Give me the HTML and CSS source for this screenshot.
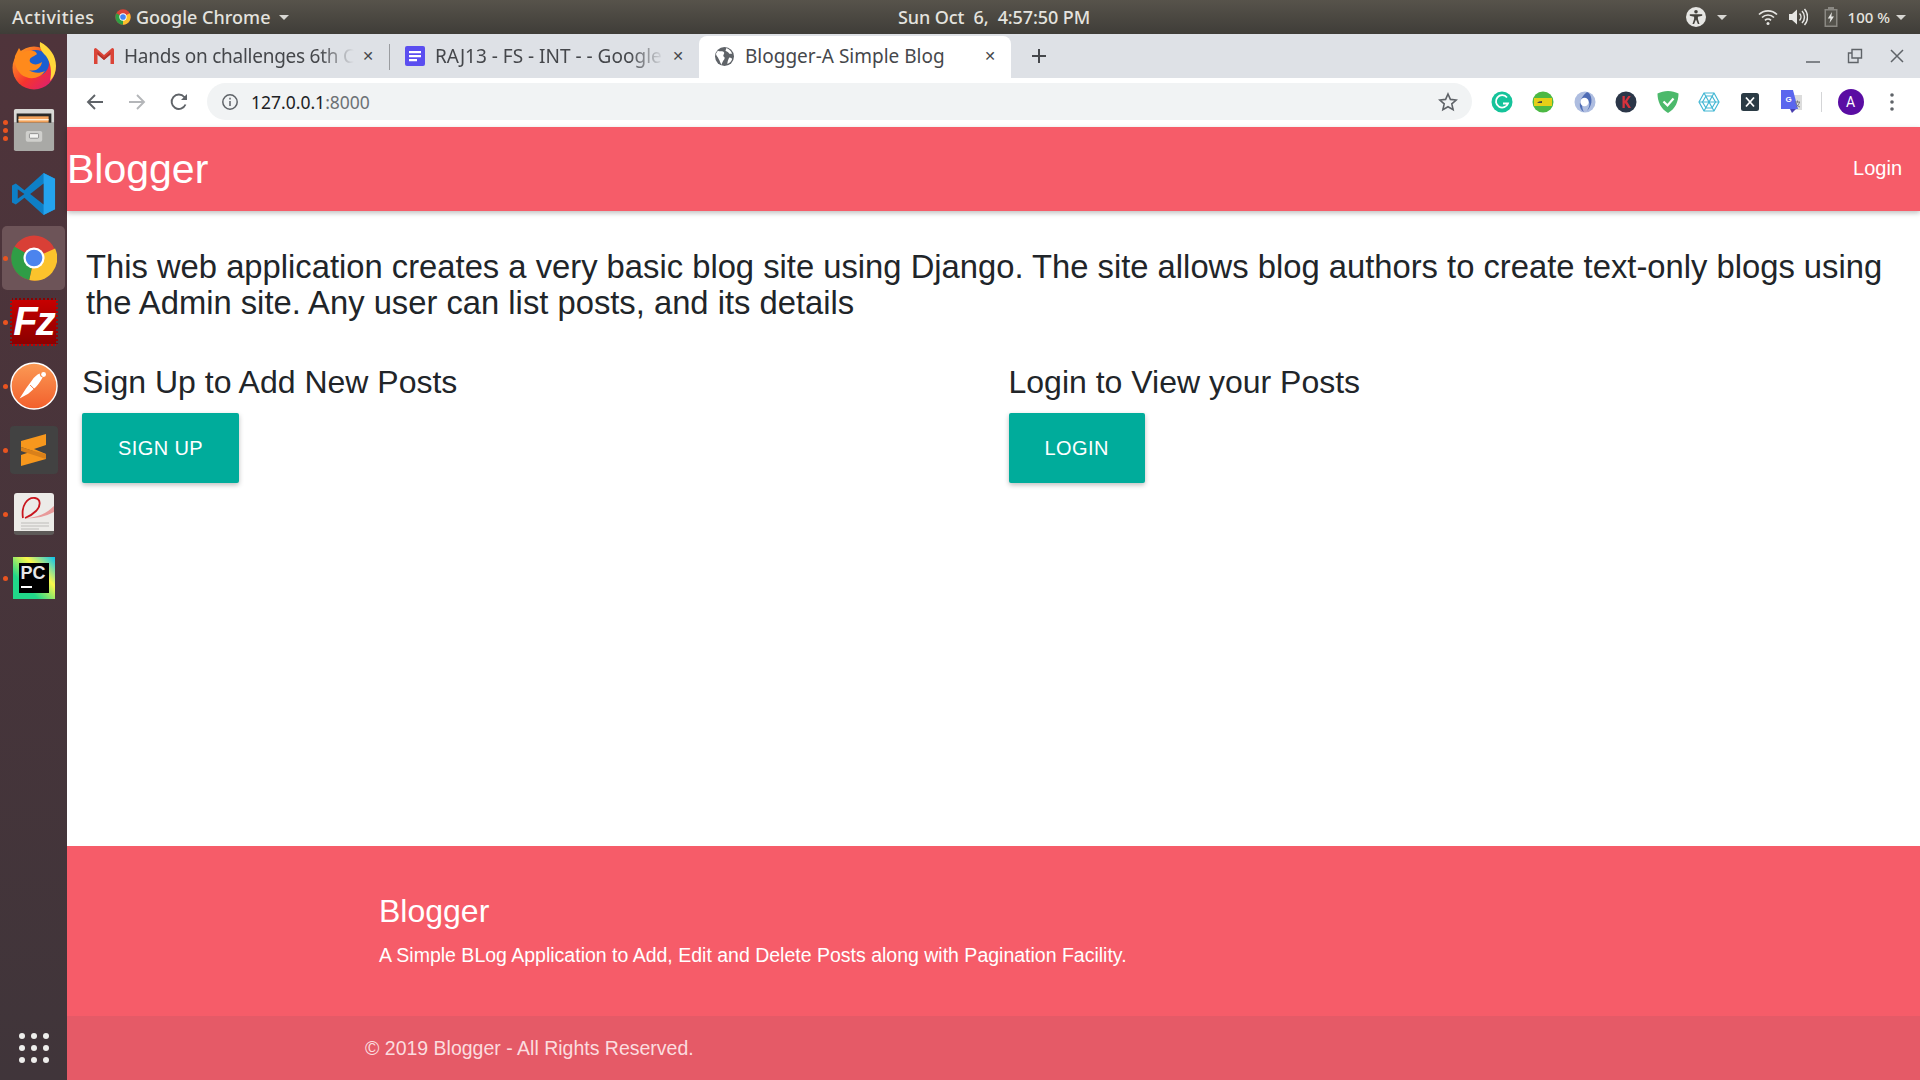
FILE: index.html
```html
<!DOCTYPE html>
<html lang="en">
<head>
  <meta charset="UTF-8">
  <title>Blogger-A Simple Blog</title>
  <link rel="stylesheet" href="styles.css">
</head>
<body>

  <div class="topbar">
    <div class="topbar-left">
      <span class="activities">Activities</span>
      <span class="app-menu">
        <svg width="16" height="16" viewBox="0 0 48 48"><circle cx="24" cy="24" r="23" fill="#db4437"/><path d="M24 24 L44 13 A23 23 0 0 1 24 47Z" fill="#fbc02d"/><path d="M24 24 L24 47 A23 23 0 0 1 4 13Z" fill="#2f9e44"/><circle cx="24" cy="24" r="11" fill="#fff"/><circle cx="24" cy="24" r="8.5" fill="#4285f4"/></svg>
        Google Chrome <i class="caret"></i>
      </span>
    </div>
    <div class="clock">Sun Oct&nbsp; 6,&nbsp; 4:57:50 PM</div>
    <div class="topbar-right">
      <svg class="a11y" width="20" height="20" viewBox="0 0 20 20"><circle cx="10" cy="10" r="10" fill="#e6e6e3"/><circle cx="10" cy="4.7" r="1.8" fill="#45433d"/><path d="M3.8 7.2h12.4v1.5l-4.3 1v2.2l1.6 5h-1.600L10 12.600 8.100 16.900H6.500l1.600-5V9.700L3.800 8.700z" fill="#45433d"/></svg>
      <i class="caret a11y-caret"></i>
      <svg class="wifi" width="20" height="18" viewBox="0 0 20 18" fill="none" stroke="#e6e6e3" stroke-width="1.700"><path d="M1 6.500a13 13 0 0 1 18 0"/><path d="M4 9.500a8.500 8.500 0 0 1 12 0"/><path d="M7 12.300a4.300 4.300 0 0 1 6 0"/><circle cx="10" cy="15.500" r="1.500" fill="#e6e6e3" stroke="none"/></svg>
      <svg class="vol" width="20" height="18" viewBox="0 0 20 18" fill="none" stroke="#e6e6e3" stroke-width="1.500"><path d="M1 6h3l5-4.500v15L4 12H1z" fill="#e6e6e3" stroke="none"/><path d="M11.500 5.500a5 5 0 0 1 0 7"/><path d="M14 3a8.500 8.500 0 0 1 0 12"/><path d="M16.500 1a12 12 0 0 1 0 16"/></svg>
      <svg class="batt" width="16" height="20" viewBox="0 0 16 20"><path d="M5 0h6v2h3.500v18H1.500V2H5z" fill="#8a8882"/><path d="M3 3.500h10v15H3z" fill="#55534c"/><path d="M9 5L4.800 11.500h2.700L6.500 16l4.500-6.500H8.300z" fill="#e6e6e3"/></svg>
      <span class="batt-text">100 %</span>
      <i class="caret"></i>
    </div>
  </div>

  <div class="desktop">
    <div class="dock">
      <div class="dock-item">
        <svg width="46" height="48" viewBox="0 0 46 48"><defs><linearGradient id="ffx" x1="0" y1="0" x2="1" y2="1"><stop offset="0" stop-color="#ffb21f"/><stop offset=".55" stop-color="#f5342f"/><stop offset="1" stop-color="#d61a7f"/></linearGradient></defs><circle cx="23" cy="26" r="21.500" fill="url(#ffx)"/><circle cx="25" cy="21" r="13" fill="#1a5fd0"/><path d="M29 0c10 5 16 14 16 24 0 6-2 11-6 15 2-9 1-18-4-25-4-4-7-8-6-14z" fill="#ffd83a"/><path d="M4 14l4-8 3 5c3-2 7-3 11-2 2 0 3 1 4 3-2 2-6 3-7 5-1 2 0 4 3 5 3 1 6 0 9-2-1 6-6 10-13 8 4 3 10 4 16 1-4 6-12 9-19 6C8 33 2 23 4 14z" fill="#ff8a1c"/></svg>
      </div>
      <div class="dock-item">
        <i class="run-dots"><b></b><b></b><b></b></i>
        <svg width="42" height="44" viewBox="0 0 46 48"><path d="M3 1h40a2 2 0 0 1 2 2v13H1V3a2 2 0 0 1 2-2z" fill="#d9d9d6"/><path d="M4 6h38v11H4z" fill="#2a2a28"/><path d="M6 9h33v7H6z" fill="#f3a35c"/><path d="M6 12h33v1.500H6z" fill="#fff3df"/><path d="M1 16h44v29a2 2 0 0 1-2 2H3a2 2 0 0 1-2-2z" fill="#a9a9a6"/><rect x="14" y="25" width="18" height="12" rx="2" fill="#cfcfcc"/><rect x="18" y="28" width="10" height="5" rx="1" fill="#f4f4f2" stroke="#777" stroke-width=".8"/></svg>
      </div>
      <div class="dock-item">
        <svg width="44" height="44" viewBox="0 0 46 46"><path d="M33 1l12 6v32l-12 6L13 27 4 34l-4-2V14l4-2 9 7z" fill="#0e7fc6"/><path d="M33 1l12 6v32l-12 6z" fill="#24a3ee"/><path d="M33 12v22L19 23z" fill="#4d343b"/><path d="M6 18l7 5-7 5z" fill="#4d343b"/></svg>
      </div>
      <div class="dock-item active">
        <i class="run-dots"><b></b></i>
        <svg width="46" height="46" viewBox="0 0 48 48"><circle cx="24" cy="24" r="23.500" fill="#d93f36"/><path d="M24 24 L46 14 A23.500 23.500 0 0 1 19 47Z" fill="#fbc32c"/><path d="M24 24 L19 47 A23.500 23.500 0 0 1 3.500 12Z" fill="#2f9d46"/><circle cx="24" cy="24" r="11" fill="#fff"/><circle cx="24" cy="24" r="8.700" fill="#4b84ee"/></svg>
      </div>
      <div class="dock-item">
        <i class="run-dots"><b></b></i>
        <div class="fz-icon">Fz</div>
      </div>
      <div class="dock-item">
        <i class="run-dots"><b></b></i>
        <svg width="48" height="48" viewBox="0 0 50 50"><defs><linearGradient id="pm" x1="0" y1="0" x2="0" y2="1"><stop offset="0" stop-color="#fb9a55"/><stop offset="1" stop-color="#f25f2c"/></linearGradient></defs><circle cx="25" cy="25" r="24" fill="url(#pm)" stroke="#fff" stroke-width="1.500"/><circle cx="35" cy="13" r="2.500" fill="#fff"/><path d="M31 12c-3 1-6 4-8 7l-6 8-7 11 9-5 8-7c4-4 6-8 7-10-2 0-3-2-3-4z" fill="#fff"/><path d="M21 24l5 5" stroke="#f37036" stroke-width="1"/></svg>
      </div>
      <div class="dock-item">
        <i class="run-dots"><b></b></i>
        <div class="subl-icon">
          <svg width="48" height="48" viewBox="0 0 48 48"><path d="M11 15L36 8V19L24 23 36 28V33L11 40V29L23 25 11 21z" fill="#f7971d"/><path d="M11 21L24 25 36 28V33L11 25z" fill="#d9801a"/></svg>
        </div>
      </div>
      <div class="dock-item">
        <i class="run-dots"><b></b></i>
        <svg width="42" height="44" viewBox="0 0 42 44"><rect x="1" y="1" width="40" height="41" rx="3" fill="#ecebe8"/><path d="M1 39h40v1a3 3 0 0 1-3 3H4a3 3 0 0 1-3-3z" fill="#5d5a58"/><path d="M41 14C30 25 16 27 6 26c12 1 24 0 35-6z" fill="#e89a9a"/><path d="M10 26C8 14 14 5 22 6c6 1 6 8 1 13-4 4-8 6-11 7" fill="none" stroke="#c9161e" stroke-width="1.800"/><path d="M8 31h28M8 34h28M8 37h18" stroke="#bdbcb9"/></svg>
      </div>
      <div class="dock-item">
        <i class="run-dots"><b></b></i>
        <div class="pc-icon"><div class="pc-inner"><span>PC</span><i></i></div></div>
      </div>
      <div class="dock-grid">
        <b></b><b></b><b></b><b></b><b></b><b></b><b></b><b></b><b></b>
      </div>
    </div>

    <div class="browser">
      <div class="tabstrip">
        <div class="tab tab-gmail">
          <svg width="20" height="16" viewBox="0 0 20 16"><path d="M0 1.500A1.500 1.500 0 0 1 2.500.500L10 7l7.500-6.500A1.500 1.500 0 0 1 20 1.500V16h-3.500V6.500L10 12 3.500 6.500V16H0z" fill="#db4437"/><path d="M3.500 6.500L10 12l6.500-5.500V4L10 9.500 3.500 4z" fill="#b5332a"/></svg>
          <span class="tab-title">Hands on challenges 6th C</span>
          <span class="tab-close">✕</span>
        </div>
        <i class="tab-sep"></i>
        <div class="tab tab-docs">
          <svg width="20" height="20" viewBox="0 0 20 20"><rect width="20" height="20" rx="2" fill="#5b4ef0"/><path d="M4 5h12v2.200H4zM4 9h12v2.200H4zM4 13h8v2.200H4z" fill="#fff"/></svg>
          <span class="tab-title">RAJ13 - FS - INT - - Google</span>
          <span class="tab-close">✕</span>
        </div>
        <div class="tab tab-active">
          <svg width="19" height="19" viewBox="0 0 20 20"><circle cx="10" cy="10" r="10" fill="#5f6368"/><path d="M3 4c2 1 4 0 6 1 2 2-1 3 0 5 2 1 1 3 0 4-1 2-2 3-2 5-2-3-2-5-3-6-1-3-3-4-3-6zM12 1c3 1 5 3 6 6h-3c-1-2-3-2-4-3zM15 11c2 0 3 1 3 2-1 2-2 4-5 5 0-3 1-5 2-7z" fill="#fff"/></svg>
          <span class="tab-title">Blogger-A Simple Blog</span>
          <span class="tab-close">✕</span>
        </div>
        <span class="new-tab">
          <svg width="16" height="16" viewBox="0 0 16 16"><path d="M8 1v14M1 8h14" stroke="#45474b" stroke-width="2"/></svg>
        </span>
        <div class="win-controls">
          <svg width="16" height="16" viewBox="0 0 16 16"><path d="M1 14h14" stroke="#5f6368" stroke-width="1.500"/></svg>
          <svg width="16" height="16" viewBox="0 0 16 16" fill="none" stroke="#5f6368" stroke-width="1.400"><path d="M5 1.500h9.500V10H5z"/><path d="M5 5H1.500v9.500H11V10"/></svg>
          <svg width="16" height="16" viewBox="0 0 16 16"><path d="M2 2l12 12M14 2L2 14" stroke="#5f6368" stroke-width="1.500"/></svg>
        </div>
      </div>

      <div class="toolbar">
        <svg class="nav-icon" width="20" height="20" viewBox="0 0 20 20" fill="none" stroke="#5f6368" stroke-width="1.900"><path d="M18 10H3M10 3l-7 7 7 7"/></svg>
        <svg class="nav-icon" width="20" height="20" viewBox="0 0 20 20" fill="none" stroke="#b4b6b9" stroke-width="1.900"><path d="M2 10h15M10 3l7 7-7 7"/></svg>
        <svg class="nav-icon" width="20" height="20" viewBox="0 0 20 20" fill="none" stroke="#5f6368" stroke-width="1.900"><path d="M16.500 12.500A7.200 7.200 0 1 1 15.300 5L17.500 7.300"/><path d="M18 2v6h-6z" fill="#5f6368" stroke="none"/></svg>
        <div class="omnibox">
          <svg width="18" height="18" viewBox="0 0 18 18" fill="none" stroke="#5f6368" stroke-width="1.500"><circle cx="9" cy="9" r="7.200"/><path d="M9 8v5M9 4.800v1.700"/></svg>
          <span class="url"><span class="url-host">127.0.0.1</span>:8000</span>
          <svg class="star" width="20" height="20" viewBox="0 0 20 20" fill="none" stroke="#5f6368" stroke-width="1.600"><path d="M10 2l2.400 5.400 5.800.6-4.400 3.900 1.300 5.800L10 14.700l-5.100 3 1.300-5.800L1.800 8l5.800-.6z"/></svg>
        </div>
        <div class="extensions">
          <svg width="22" height="22" viewBox="0 0 22 22"><circle cx="11" cy="11" r="10.500" fill="#15c39a"/><path d="M16 6.500A6.200 6.200 0 1 0 17 12.500h-5" fill="none" stroke="#fff" stroke-width="1.800"/></svg>
          <svg width="22" height="22" viewBox="0 0 22 22"><circle cx="11" cy="11" r="10.500" fill="#4cb944"/><rect x="2" y="7" width="18" height="8" fill="#e4cf18"/><path d="M5 12h5v-2l-3 .5z" fill="#444"/></svg>
          <svg width="22" height="22" viewBox="0 0 22 22"><circle cx="11" cy="11" r="10.500" fill="#aebde0"/><path d="M13 1c5 2 7 12 0 19 4-6 3-11-2-10-3 1-4 6-1 11-6-3-6-13 3-20z" fill="#4f6cb5"/><circle cx="10.500" cy="11" r="4.200" fill="#fff"/></svg>
          <svg width="22" height="22" viewBox="0 0 22 22"><circle cx="11" cy="11" r="10.500" fill="#2b3648"/><path d="M7.500 5h2.300v5l3.500-5h2.500l-3.700 5.500L16 17h-2.600l-3.600-5.300V17H7.500z" fill="#d8323c"/></svg>
          <svg width="22" height="22" viewBox="0 0 22 22"><path d="M11 0c4 0 7 1 10.500 2.500C21.500 11 18 18 11 22 4 18 .5 11 .5 2.500 4 1 7 0 11 0z" fill="#4cb96b"/><path d="M6.500 10.500l4 4 6-7" fill="none" stroke="#fff" stroke-width="2.200"/></svg>
          <svg width="22" height="22" viewBox="0 0 22 22" fill="none" stroke="#45b8d4" stroke-width="1.200"><path d="M1 11l5-9h10l5 9-5 9H6z"/><path d="M4.500 11l3.500-6h6l3.500 6-3.500 6H8z"/><path d="M1 11h20M6 2l10 18M16 2L6 20"/></svg>
          <svg width="22" height="22" viewBox="0 0 22 22"><rect x="2" y="2" width="18" height="18" rx="2.500" fill="#2b3b45"/><path d="M7 6.500l8 9M15 6.500l-8 9" stroke="#fff" stroke-width="1.800"/></svg>
          <svg width="22" height="24" viewBox="0 0 22 24"><path d="M10 5h11v15H10z" fill="#dcdcdc"/><path d="M0 0h12l5 19H0z" fill="#5a66ee"/><path d="M9 19h6l-4 4z" fill="#4a3fb0"/><path d="M14 12h5M16.500 10.500v2M15 17c2-1 3-3 3.500-5M15 13c.5 2 2 3.500 4 4" stroke="#777" stroke-width=".9" fill="none"/><text x="4.500" y="12" class="ext-g">G</text></svg>
          <i class="ext-sep"></i>
          <span class="avatar">A</span>
          <svg class="menu-dots" width="4" height="18" viewBox="0 0 4 18"><circle cx="2" cy="2" r="1.800" fill="#5f6368"/><circle cx="2" cy="9" r="1.800" fill="#5f6368"/><circle cx="2" cy="16" r="1.800" fill="#5f6368"/></svg>
        </div>
      </div>

      <div class="page">
        <nav class="navbar">
          <span class="brand">Blogger</span>
          <span class="nav-link">Login</span>
        </nav>

        <main class="content">
          <p class="lead">This web application creates a very basic blog site using Django. The site allows blog authors to create text-only blogs using the Admin site. Any user can list posts, and its details</p>
          <div class="row">
            <div class="col">
              <h3>Sign Up to Add New Posts</h3>
              <span class="btn">SIGN UP</span>
            </div>
            <div class="col">
              <h3>Login to View your Posts</h3>
              <span class="btn">LOGIN</span>
            </div>
          </div>
        </main>

        <footer>
          <div class="footer-main">
            <h4>Blogger</h4>
            <p>A Simple BLog Application to Add, Edit and Delete Posts along with Pagination Facility.</p>
          </div>
          <div class="footer-copy">© 2019 Blogger - All Rights Reserved.</div>
        </footer>
      </div>
    </div>
  </div>

</body>
</html>
```
FILE: styles.css
```css
* {
  box-sizing: border-box;
}
html, body {
  margin: 0;
  height: 100%;
  overflow: hidden;
}
body {
  display: flex;
  flex-direction: column;
  font-family: "Liberation Sans", Arial, sans-serif;
  color: #212529;
  background: #fff;
}
i {
  display: block;
  font-style: normal;
}

/* ubuntu top bar */
.topbar {
  height: 34px;
  flex: none;
  display: flex;
  align-items: center;
  justify-content: space-between;
  position: relative;
  padding: 0 14px 0 12px;
  background: linear-gradient(#57534b, #3f3d38);
  color: #e4e3df;
  font-family: "Noto Sans", sans-serif;
  font-size: 18px;
  font-weight: 500;
}
.topbar-left, .topbar-right, .app-menu {
  display: flex;
  align-items: center;
}
.activities {
  width: 103px;
  letter-spacing: .5px;
}
.app-menu {
  gap: 5px;
  letter-spacing: 0;
}
.clock {
  position: absolute;
  left: 898px;
  letter-spacing: -.1px;
}
.caret {
  width: 0;
  height: 0;
  border-left: 5px solid transparent;
  border-right: 5px solid transparent;
  border-top: 5px solid #d8d7d3;
  margin-left: 4px;
}
.a11y-caret {
  margin-left: 11px;
  margin-right: 31px;
}
.wifi {
  margin-right: 10px;
}
.vol {
  margin-right: 15px;
}
.batt-text {
  font-size: 15px;
  margin-left: 9px;
  margin-right: 2px;
}

/* dock */
.desktop {
  flex: 1;
  display: flex;
  min-height: 0;
}
.dock {
  width: 67px;
  flex: none;
  display: flex;
  flex-direction: column;
  align-items: center;
  background: linear-gradient(#4f343b, #40353a);
}
.dock-item {
  position: relative;
  width: 63px;
  height: 64px;
  flex: none;
  display: flex;
  align-items: center;
  justify-content: center;
  border-radius: 5px;
}
.dock-item.active {
  background: #6d5458;
}
.run-dots {
  position: absolute;
  left: 1px;
  top: 0;
  bottom: 0;
  display: flex;
  flex-direction: column;
  justify-content: center;
  gap: 3px;
}
.run-dots b {
  width: 5px;
  height: 5px;
  border-radius: 50%;
  background: #e95420;
}
.fz-icon {
  width: 48px;
  height: 48px;
  background: linear-gradient(#c70000, #8b0000);
  border: 2px dotted #4f343b;
  color: #fff;
  font-size: 40px;
  font-weight: bold;
  font-style: italic;
  line-height: 42px;
  text-align: center;
  letter-spacing: -2px;
}
.subl-icon {
  width: 48px;
  height: 48px;
  background: #424242;
  border-radius: 4px;
}
.pc-icon {
  width: 42px;
  height: 42px;
  padding: 6px;
  background: linear-gradient(45deg, #21d789 30%, #fcf84a 65%, #07c3f2);
}
.pc-inner {
  width: 30px;
  height: 30px;
  background: #000;
  padding: 1px 2px;
  color: #e8e8e8;
  font-size: 18px;
  font-weight: bold;
  line-height: 19px;
}
.pc-inner span {
  display: block;
}
.pc-inner i {
  width: 11px;
  height: 2px;
  margin-top: 3px;
  background: #fff;
}
.dock-grid {
  margin-top: auto;
  margin-bottom: 17px;
  width: 30px;
  display: grid;
  grid-template-columns: repeat(3, 6px);
  justify-content: space-between;
  row-gap: 6px;
}
.dock-grid b {
  height: 6px;
  border-radius: 50%;
  background: #eeeeec;
}

/* chrome */
.browser {
  flex: 1;
  min-width: 0;
  display: flex;
  flex-direction: column;
}
.tabstrip {
  height: 44px;
  flex: none;
  display: flex;
  align-items: flex-end;
  background: #dee1e6;
  font-family: "Noto Sans", sans-serif;
  font-size: 19px;
  color: #45474b;
}
.tab {
  height: 42px;
  padding-bottom: 2px;
  display: flex;
  align-items: center;
}
.tab-gmail {
  width: 322px;
  padding-left: 27px;
}
.tab-docs {
  width: 309px;
  padding-left: 15px;
}
.tab-active {
  width: 312px;
  padding-left: 16px;
  background: #fff;
  border-radius: 8px 8px 0 0;
}
.tab-title {
  flex: 1;
  min-width: 0;
  margin-left: 10px;
  white-space: nowrap;
  overflow: hidden;
  -webkit-mask-image: linear-gradient(to right, #000 85%, transparent);
  mask-image: linear-gradient(to right, #000 85%, transparent);
}
.tab-gmail .tab-title {
  letter-spacing: -.25px;
}
.tab-active .tab-title {
  margin-left: 11px;
  -webkit-mask-image: none;
  mask-image: none;
}
.tab-close {
  width: 20px;
  margin: 0 11px 0 4px;
  font-family: "DejaVu Sans", sans-serif;
  font-size: 14px;
  text-align: center;
}
.tab-sep {
  width: 1px;
  height: 26px;
  margin-bottom: 8px;
  background: #9a9ca0;
}
.new-tab {
  width: 16px;
  height: 42px;
  padding-bottom: 2px;
  margin-left: 20px;
  display: flex;
  align-items: center;
}
.win-controls {
  height: 42px;
  padding-bottom: 2px;
  margin-left: auto;
  margin-right: 15px;
  display: flex;
  align-items: center;
  gap: 26px;
}
.toolbar {
  height: 49px;
  flex: none;
  display: flex;
  align-items: center;
  background: #fff;
  padding: 0 18px 2px 18px;
}
.nav-icon {
  margin-right: 22px;
}
.omnibox {
  width: 1265px;
  height: 37px;
  margin-left: -4px;
  padding: 0 9px 0 14px;
  display: flex;
  align-items: center;
  border-radius: 19px;
  background: #f1f3f4;
  font-family: "Noto Sans", sans-serif;
  font-size: 17.500px;
  color: #6d7175;
}
.url {
  margin-left: 12px;
}
.url-host {
  color: #202124;
}
.star {
  margin-left: auto;
  margin-right: 5px;
}
.extensions {
  flex: 1;
  display: flex;
  align-items: center;
  margin-left: 19px;
  gap: 19.400px;
}
.ext-g {
  font-family: "Liberation Sans", sans-serif;
  font-size: 8px;
  font-weight: bold;
  fill: #fff;
}
.ext-sep {
  width: 1px;
  height: 20px;
  margin-left: -1px;
  background: #d4d5d7;
}
.avatar {
  width: 26px;
  height: 26px;
  margin-left: -4px;
  border-radius: 50%;
  background: #5a0da3;
  color: #fff;
  font-family: "Roboto", sans-serif;
  font-size: 14px;
  line-height: 26px;
  text-align: center;
}
.menu-dots {
  margin-left: 7px;
}

/* page */
.page {
  flex: 1;
  min-height: 0;
  display: flex;
  flex-direction: column;
}
.navbar {
  height: 84px;
  flex: none;
  display: flex;
  align-items: center;
  justify-content: space-between;
  padding-right: 18px;
  background: #f65c69;
  box-shadow: 0 2px 5px rgba(0, 0, 0, .26);
  color: #fff;
}
.brand {
  font-size: 41px;
}
.nav-link {
  font-size: 20px;
  margin-bottom: 1px;
}
.content {
  flex: 1;
}
.lead {
  margin: 38px 15px 0 19px;
  font-size: 32.750px;
  line-height: 36px;
}
.row {
  display: flex;
  margin-top: 45px;
}
.col {
  flex: 0 0 50%;
  padding: 0 15px;
}
h3 {
  margin: 0 0 13px;
  font-size: 32px;
  font-weight: 400;
  line-height: 1.05;
}
.btn {
  display: inline-block;
  height: 70px;
  padding: 0 36px;
  border-radius: 2px;
  background: #00ac9b;
  box-shadow: 0 2px 5px rgba(0, 0, 0, .26);
  color: #fff;
  font-size: 20px;
  line-height: 70px;
  letter-spacing: .4px;
}
.footer-main {
  height: 170px;
  padding: 47px 0 0 312px;
  background: #f65c69;
  color: #fff;
}
.footer-main h4 {
  margin: 0;
  font-size: 32px;
  font-weight: 400;
  line-height: 1.15;
}
.footer-main p {
  margin: 14px 0 0;
  font-size: 19.500px;
}
.footer-copy {
  height: 64px;
  padding-left: 298px;
  background: #e55a67;
  color: #fbdcdf;
  font-size: 19.500px;
  line-height: 64px;
}
```
